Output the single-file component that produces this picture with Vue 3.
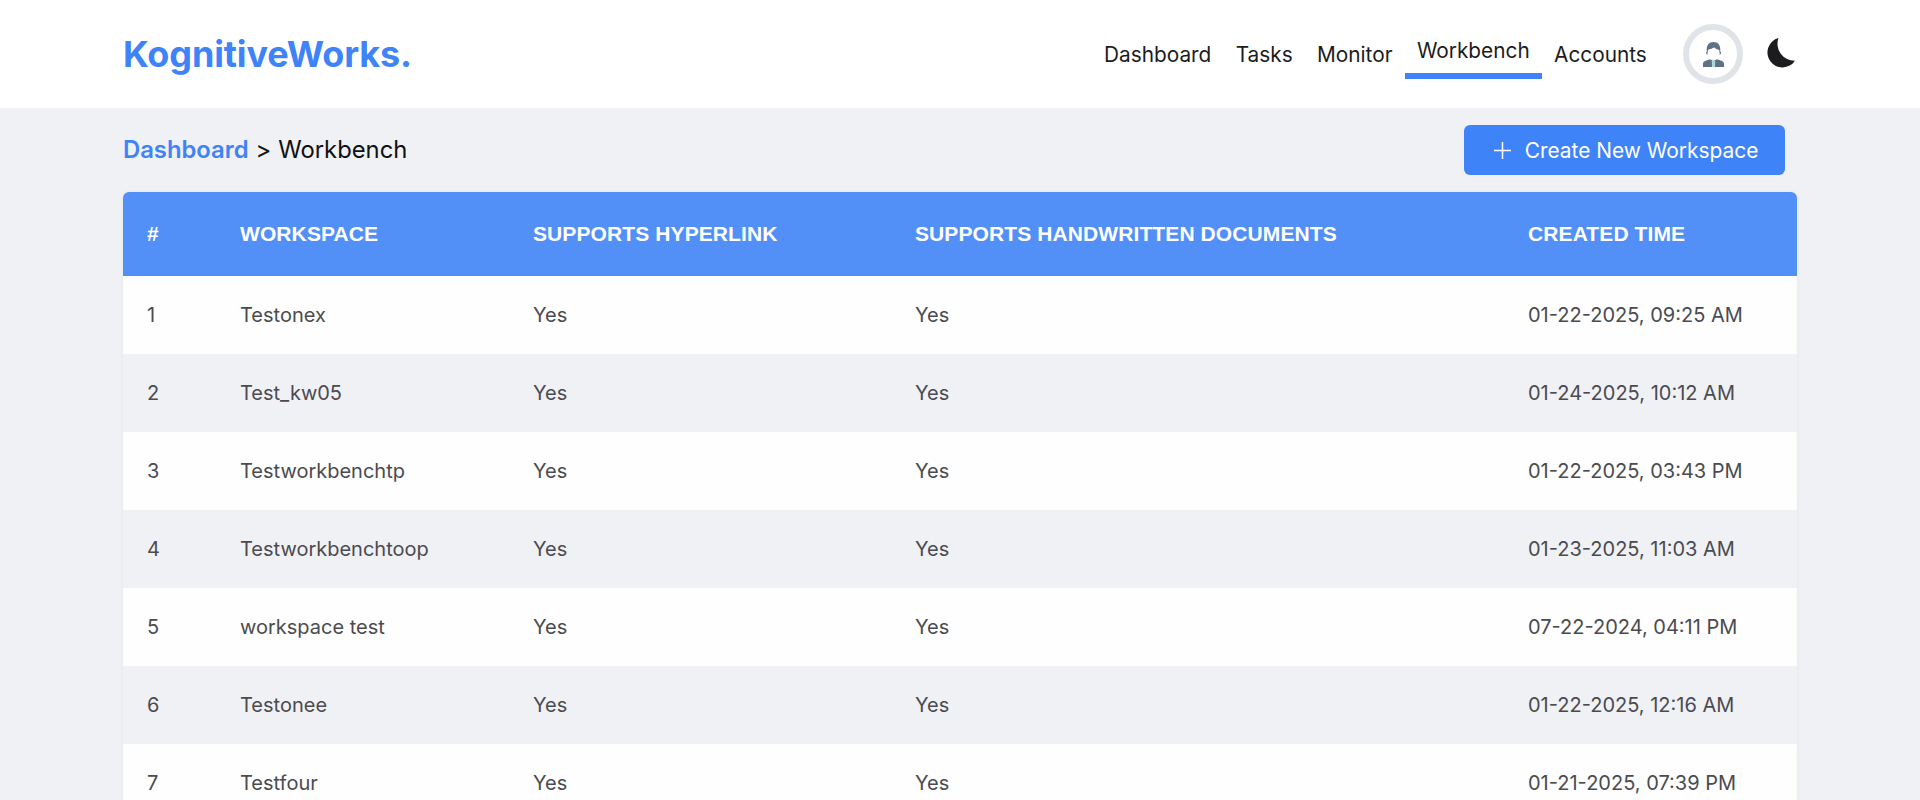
<script setup>
const navItems = [
  { label: 'Dashboard' },
  { label: 'Tasks' },
  { label: 'Monitor' },
  { label: 'Workbench', active: true },
  { label: 'Accounts' },
]

const rows = [
  { id: 1, name: 'Testonex', time: '01-22-2025, 09:25 AM' },
  { id: 2, name: 'Test_kw05', time: '01-24-2025, 10:12 AM' },
  { id: 3, name: 'Testworkbenchtp', time: '01-22-2025, 03:43 PM' },
  { id: 4, name: 'Testworkbenchtoop', time: '01-23-2025, 11:03 AM' },
  { id: 5, name: 'workspace test', time: '07-22-2024, 04:11 PM' },
  { id: 6, name: 'Testonee', time: '01-22-2025, 12:16 AM' },
  { id: 7, name: 'Testfour', time: '01-21-2025, 07:39 PM' },
]
</script>

<template>
  <div class="page">
    <header class="topbar">
      <div class="logo">KognitiveWorks.</div>
      <nav class="nav">
        <a v-for="item in navItems" :key="item.label" class="nav-link" :class="{ active: item.active }">{{ item.label }}</a>
      </nav>
      <div class="avatar">
        <svg width="21" height="25" viewBox="0 0 21 25">
          <path d="M0 25v-3.200c0-1.700 1-2.500 2.600-3.100L7 17.200l3.500 1.800 3.500-1.800 4.400 1.500c1.600.6 2.600 1.400 2.600 3.100V25z" fill="#5d7285"/>
          <path d="M8.800 18.400l1.700.8 1.700-.8L12 25H9z" fill="#a9dccf"/>
          <path d="M3.800 9.500C3 3 6.200 0 10.500 0s7.500 3 6.700 9.500c.7.300 1 1 .7 2.200l-1.100 1.300c-.2-2-.3-3.500-.6-5-2-.2-3.700-1-5-2.400C9.500 6.800 7 7.600 5 8c-.3 1.500-.4 3-.6 5l-1.100-1.300c-.3-1.200 0-1.900.5-2.200z" fill="#5d7285"/>
          <path d="M5 8c2-.4 4.500-1.200 6.200-2.400 1.300 1.400 3 2.200 4.800 2.400 0 3.800-2.500 7.800-5.500 7.800S5 11.800 5 8z" fill="#fff"/>
        </svg>
      </div>
      <svg class="moon" width="28" height="30" viewBox="0 0 28 30">
        <path d="M11.500 0A15 15 0 1 0 28 22.700 17 17 0 0 1 11.500 0z" fill="#1c1c1e"/>
      </svg>
    </header>

    <main class="content">
      <div class="toolbar">
        <div class="crumbs">
          <a class="crumb-link">Dashboard</a>
          <span class="crumb-sep">&gt;</span>
          <span>Workbench</span>
        </div>
        <button class="create-btn">
          <svg width="17" height="17" viewBox="0 0 17 17">
            <path d="M8.500 0v17M0 8.500h17" stroke="#fff" stroke-width="1.500" fill="none"/>
          </svg>
          <span>Create New Workspace</span>
        </button>
      </div>

      <div class="table">
        <div class="row head">
          <div>#</div>
          <div>WORKSPACE</div>
          <div>SUPPORTS HYPERLINK</div>
          <div>SUPPORTS HANDWRITTEN DOCUMENTS</div>
          <div>CREATED TIME</div>
        </div>
        <div v-for="row in rows" :key="row.id" class="row body">
          <div>{{ row.id }}</div>
          <div>{{ row.name }}</div>
          <div>Yes</div>
          <div>Yes</div>
          <div>{{ row.time }}</div>
        </div>
      </div>
    </main>
  </div>
</template>

<style>
html, body { margin: 0; height: 100%; overflow: hidden; background: #f0f1f5; }
</style>

<style scoped>
.page { font-family: Inter, "Liberation Sans", sans-serif; }

.topbar {
  height: 108px; background: #fff;
  display: flex; align-items: center;
  padding: 0 125px 0 123px;
}
.logo { font-size: 36px; font-weight: 700; color: #3f83f8; letter-spacing: -0.13px; margin-right: auto; }
.nav { display: flex; align-items: center; height: 108px; margin-right: 24px; }
.nav-link { font-size: 20.800px; line-height: 25px; color: #1c1c1e; padding: 0 12.200px; }
.nav-link.active {
  padding-bottom: 10px;
  margin-top: 9px;
  border-bottom: 6px solid #3f83f8;
}
.avatar {
  width: 60px; height: 60px; border-radius: 50%;
  border: 6px solid #e0e4e9; box-sizing: border-box;
  display: flex; align-items: center; justify-content: center;
  margin-right: 24px;
}
.moon { flex: none; margin-bottom: 2px; }

.content { padding: 0 123px; }
.toolbar { height: 84px; display: flex; align-items: center; justify-content: space-between; padding-right: 12px; }
.crumbs { font-size: 23.800px; color: #111; display: flex; gap: 7px; padding-bottom: 2px; }
.crumb-link { color: #3f83f8; font-weight: 600; }
.create-btn {
  width: 321px; height: 50px; border: 0; border-radius: 6px; padding: 0 0 0 3px;
  background: #3f83f8; color: #fff;
  font-family: inherit; font-size: 20.900px;
  display: flex; align-items: center; justify-content: center; gap: 14px;
}

.table { border-radius: 6px 6px 0 0; overflow: hidden; box-shadow: 0 0 4px rgba(0, 0, 0, 0.05); }
.row { display: grid; grid-template-columns: 117px 293px 382px 613px 269px; align-items: center; }
.row > div { padding-left: 24px; }
.row > div:nth-child(n+2) { padding-left: 0; }
.head {
  height: 84px; background: #5290f7; color: #fff;
  font-family: "Liberation Sans", Arial, sans-serif; font-weight: 700; font-size: 21px; letter-spacing: 0.1px;
}
.body { height: 78px; font-size: 20px; color: #4b4b4f; background: #fdfefd; }
.body:nth-child(odd) { background: #f0f1f5; }
</style>
